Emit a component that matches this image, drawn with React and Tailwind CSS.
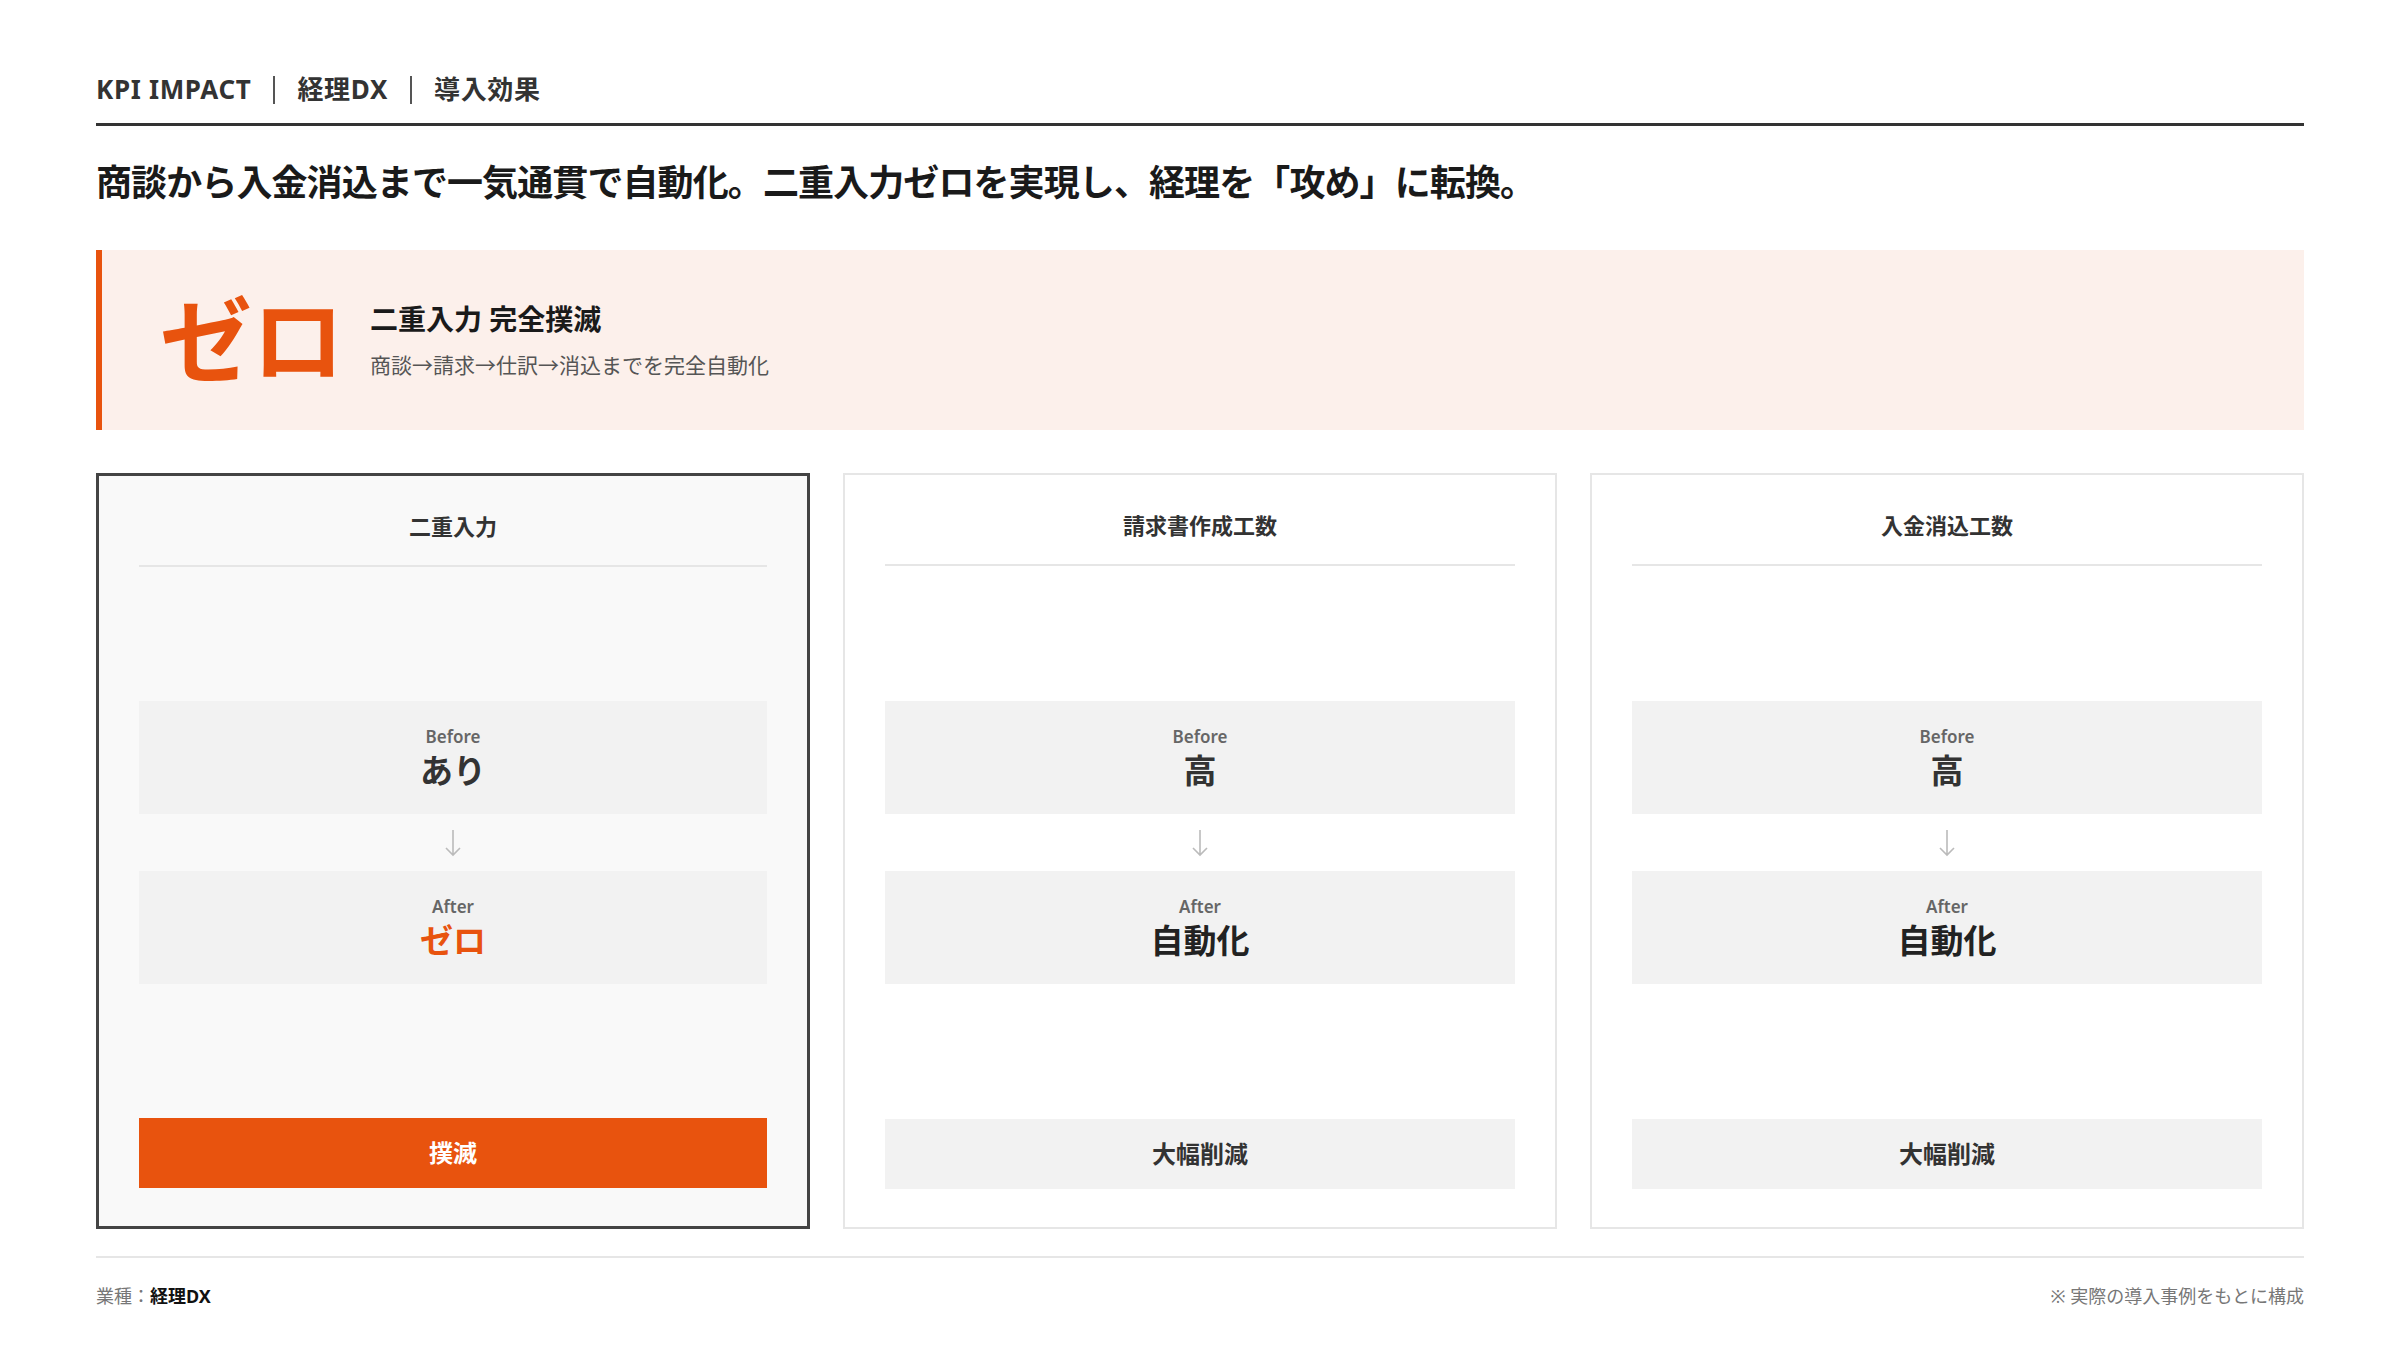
const font = { fontFamily: '"Noto Sans", "Noto Sans CJK JP", sans-serif' };

function Card({ title, before, after, result, active }) {
  return (
    <div
      className={`flex flex-col px-[40px] pt-[34px] pb-[38px] ${
        active ? "border-[3px] border-[#444] bg-[#f9f9f9]" : "border-2 border-[#e6e6e6] bg-white"
      }`}
    >
      <div className={`text-center text-[22px] font-bold ${active ? "text-[#333]" : "text-[#333]"}`}>{title}</div>
      <div className="mt-[22px] h-[2px] bg-[#e6e6e6]" />
      <div className="flex flex-1 flex-col justify-center">
        <div className="flex h-[113px] flex-col items-center justify-center bg-[#f2f2f2]">
          <div className="text-[17px] font-semibold text-[#666]">Before</div>
          <div className="text-[33px] font-bold leading-tight text-[#333]">{before}</div>
        </div>
        <div className="flex h-[57px] items-center justify-center">
          <svg width="18" height="30" viewBox="0 0 18 30" fill="none" stroke="#bbb" strokeWidth="1.6">
            <path d="M9 2v25M2 20l7 7 7-7" />
          </svg>
        </div>
        <div className="flex h-[113px] flex-col items-center justify-center bg-[#f2f2f2]">
          <div className="text-[17px] font-semibold text-[#666]">After</div>
          <div className={`text-[33px] font-bold leading-tight ${active ? "text-[#e8530e]" : "text-[#222]"}`}>{after}</div>
        </div>
      </div>
      <div
        className={`flex h-[70px] items-center justify-center text-[24px] font-bold ${
          active ? "bg-[#e8530e] text-white" : "bg-[#f2f2f2] text-[#333]"
        }`}
      >
        {result}
      </div>
    </div>
  );
}

export default function App() {
  return (
    <div className="min-h-[1350px] w-[2400px] bg-white px-[96px] pt-[70px]" style={font}>
      {/* header */}
      <div className="flex items-center pb-[14px] text-[26px] font-bold tracking-wide text-[#333] border-b-[3px] border-[#333]">
        <span>KPI IMPACT</span>
        <span className="mx-[22px] h-[28px] w-[2px] bg-[#555]" />
        <span>経理DX</span>
        <span className="mx-[22px] h-[28px] w-[2px] bg-[#555]" />
        <span>導入効果</span>
      </div>
      <h1 className="mt-[30px] text-[36px] font-bold text-[#1a1a1a] tracking-tight">
        商談から入金消込まで一気通貫で自動化。二重入力ゼロを実現し、経理を「攻め」に転換。
      </h1>

      {/* banner */}
      <div className="mt-[40px] flex h-[180px] items-center border-l-[6px] border-[#e8530e] bg-[#fcf0eb] pl-[58px]">
        <div className="w-[210px] text-[92px] font-bold leading-none text-[#e8530e]">ゼロ</div>
        <div>
          <div className="text-[28px] font-bold text-[#1a1a1a]">二重入力 完全撲滅</div>
          <div className="mt-[10px] text-[21px] text-[#555]">商談→請求→仕訳→消込までを完全自動化</div>
        </div>
      </div>

      {/* cards */}
      <div className="mt-[43px] grid h-[756px] grid-cols-3 gap-[33px]">
        <Card title="二重入力" before="あり" after="ゼロ" result="撲滅" active />
        <Card title="請求書作成工数" before="高" after="自動化" result="大幅削減" />
        <Card title="入金消込工数" before="高" after="自動化" result="大幅削減" />
      </div>

      {/* footer */}
      <div className="mt-[27px] flex items-center justify-between border-t-2 border-[#e6e6e6] pt-[25px] text-[18px] text-[#777]">
        <div>
          業種：<span className="font-bold text-[#111]">経理DX</span>
        </div>
        <div>※ 実際の導入事例をもとに構成</div>
      </div>
    </div>
  );
}
